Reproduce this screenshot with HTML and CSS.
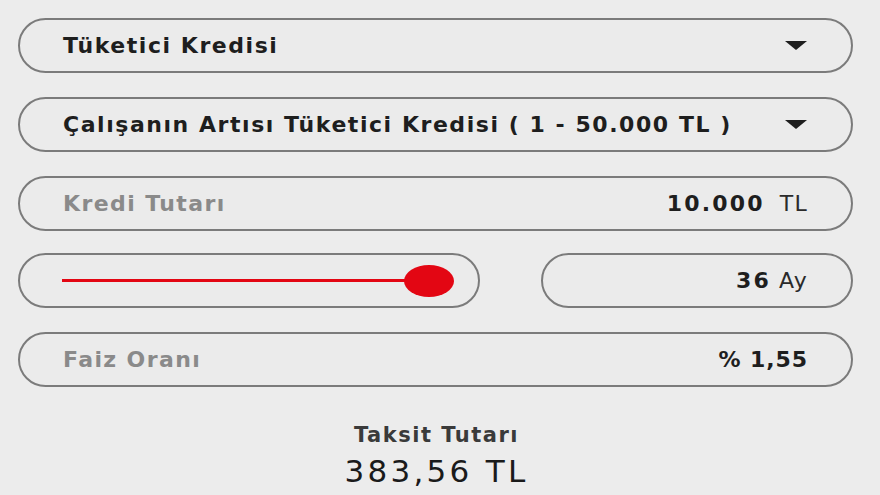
FILE: index.html
```html
<!DOCTYPE html>
<html lang="tr">
<head>
<meta charset="utf-8">
<title>Kredi Hesaplama</title>
<link rel="stylesheet" href="styles.css">
</head>
<body>
<main class="calc">
  <div class="pill select">
    <span class="strong">Tüketici Kredisi</span>
    <span class="caret"></span>
  </div>
  <div class="pill select">
    <span class="strong">Çalışanın Artısı Tüketici Kredisi ( 1 - 50.000 TL )</span>
    <span class="caret"></span>
  </div>
  <div class="pill field">
    <span class="label">Kredi Tutarı</span>
    <span class="value"><b>10.000</b><span class="unit unit-wide">TL</span></span>
  </div>
  <div class="row">
    <div class="pill slider">
      <div class="track"></div>
      <div class="thumb"></div>
    </div>
    <div class="pill term">
      <span class="value"><b>36</b><span class="unit">Ay</span></span>
    </div>
  </div>
  <div class="pill field">
    <span class="label">Faiz Oranı</span>
    <span class="value"><b class="rate">% 1,55</b></span>
  </div>
  <div class="result">
    <div class="result-title">Taksit Tutarı</div>
    <div class="result-value">383,56 TL</div>
  </div>
</main>
</body>
</html>
```

FILE: styles.css
```css
html, body {
  margin: 0;
  padding: 0;
}

body {
  background: #ececec;
  font-family: "DejaVu Sans", "Liberation Sans", sans-serif;
  color: #1c1c1c;
  width: 880px;
  height: 495px;
  overflow: hidden;
}

.calc {
  width: 835px;
  margin: 18px 0 0 18px;
  display: flex;
  flex-direction: column;
  gap: 24px;
}

.pill {
  box-sizing: border-box;
  height: 55px;
  border: 2px solid #7b7b7b;
  border-radius: 28px;
  background: #ebebeb;
  display: flex;
  align-items: center;
  padding: 0 44px 0 43px;
  font-size: 22px;
  letter-spacing: 1.25px;
}

.select {
  justify-content: space-between;
}

.strong {
  font-weight: bold;
  color: #1e1e1e;
  letter-spacing: 1.55px;
}

.caret {
  width: 0;
  height: 0;
  border-left: 11px solid transparent;
  border-right: 11px solid transparent;
  border-top: 9px solid #1e1e1e;
}

.field {
  justify-content: space-between;
}

.label {
  font-weight: bold;
  color: #8a8a8a;
  letter-spacing: 1.4px;
}

.value {
  color: #1e1e1e;
  white-space: pre;
  margin-right: -1px;
}

.value b {
  font-weight: bold;
  letter-spacing: 2.2px;
}

.value b.rate {
  letter-spacing: 0.9px;
}

.unit {
  font-weight: normal;
  color: #2a2a2a;
  margin-left: 8px;
}

.unit-wide {
  margin-left: 15px;
}

.row {
  display: flex;
  gap: 61px;
  margin-top: -2px;
}

.slider {
  width: 462px;
  position: relative;
  padding: 0 26px 0 42px;
}

.track {
  flex: 1;
  height: 3px;
  background: #e30613;
  margin-right: 25px;
}

.thumb {
  position: absolute;
  right: 24px;
  top: 10px;
  width: 50px;
  height: 32px;
  border-radius: 50%;
  background: #e30613;
}

.term {
  flex: 1;
  justify-content: flex-end;
}

.result {
  margin-top: 12px;
  display: flex;
  flex-direction: column;
  align-items: center;
  padding-left: 2px;
}

.result-title {
  font-weight: bold;
  font-size: 21px;
  letter-spacing: 1.5px;
  color: #3a3a3a;
}

.result-value {
  font-size: 31px;
  letter-spacing: 3.3px;
  color: #1a1a1a;
  margin-top: 6px;
}
```
